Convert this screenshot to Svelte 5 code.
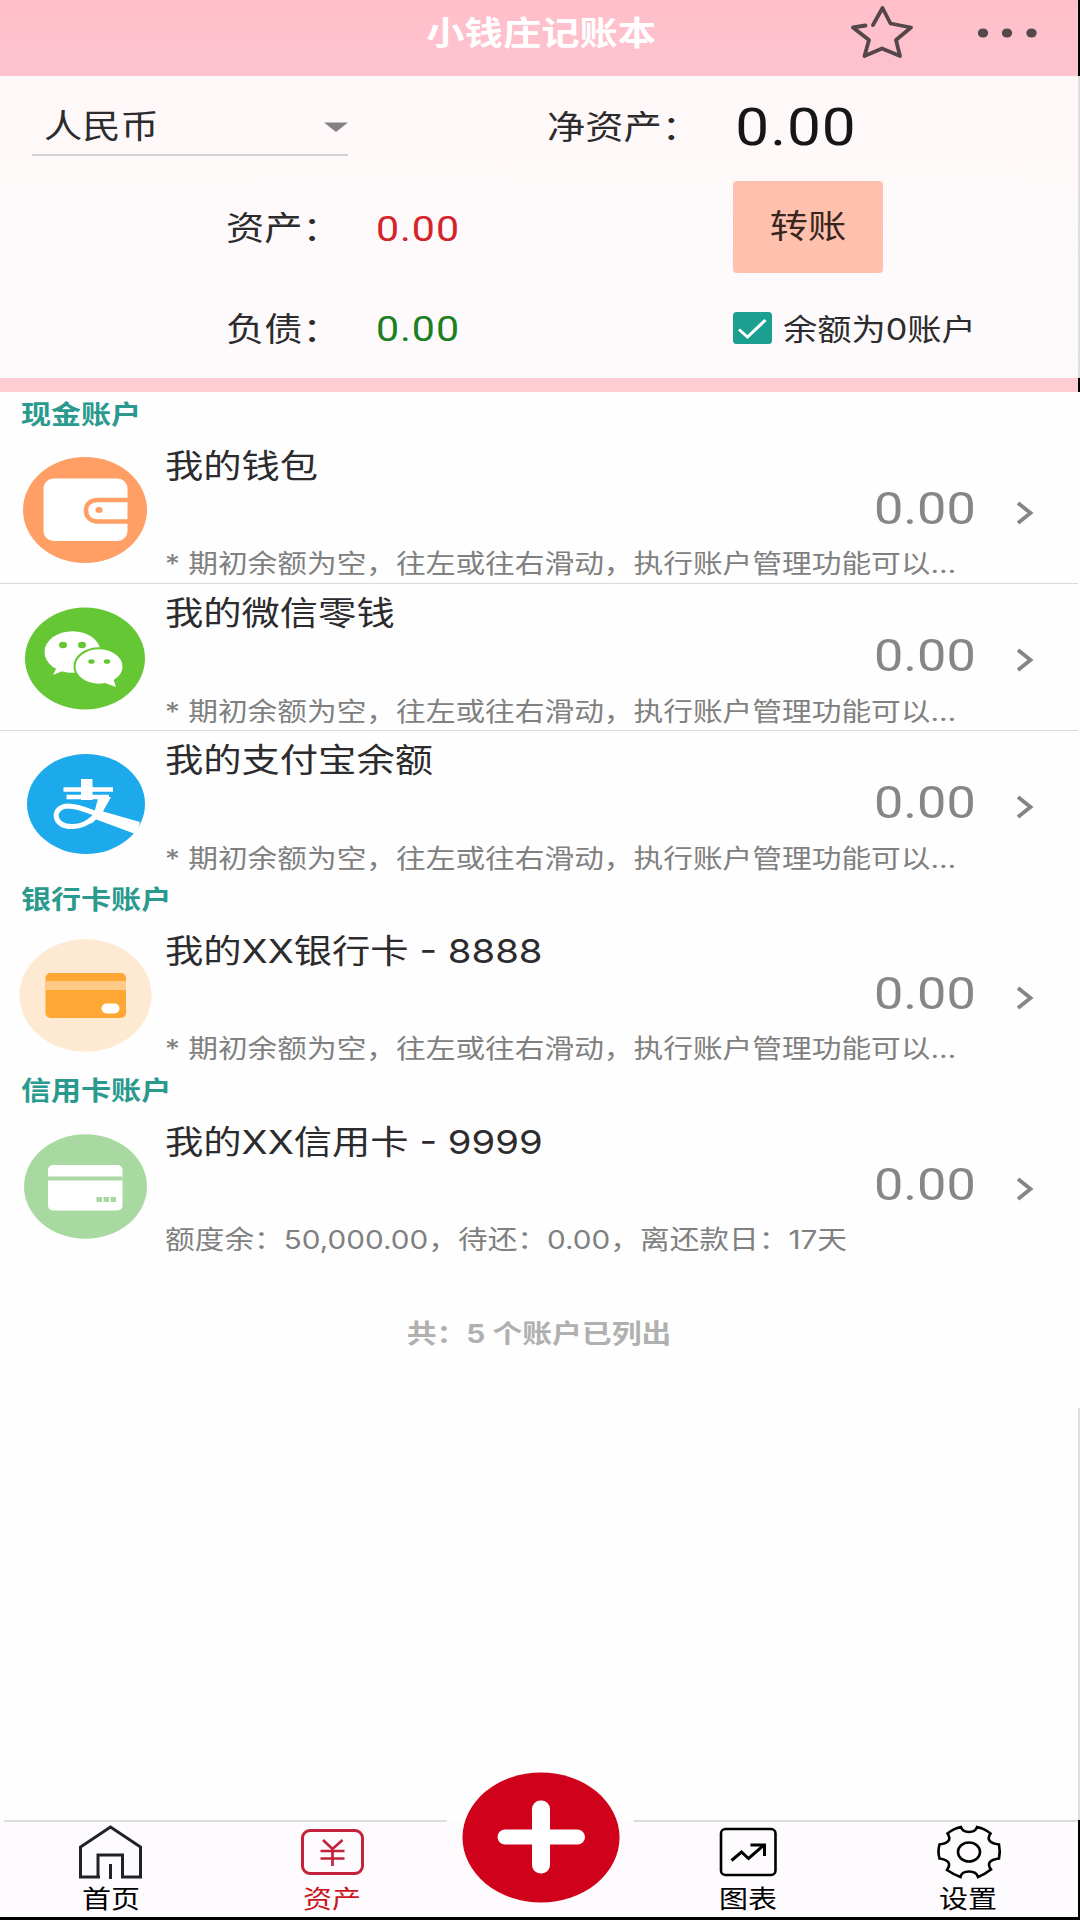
<script lang="ts">
	type Icono = 'wallet' | 'wechat' | 'alipay' | 'bank' | 'credit';

	type Account = {
		name: string;
		icon: Icono;
		balance: string;
		note: string;
	};

	type Group = {
		title: string;
		accounts: Account[];
	};

	const hint = '* 期初余额为空，往左或往右滑动，执行账户管理功能可以…';

	const groups: Group[] = [
		{
			title: '现金账户',
			accounts: [
				{ name: '我的钱包', icon: 'wallet', balance: '0.00', note: hint },
				{ name: '我的微信零钱', icon: 'wechat', balance: '0.00', note: hint },
				{ name: '我的支付宝余额', icon: 'alipay', balance: '0.00', note: hint }
			]
		},
		{
			title: '银行卡账户',
			accounts: [{ name: '我的XX银行卡 - 8888', icon: 'bank', balance: '0.00', note: hint }]
		},
		{
			title: '信用卡账户',
			accounts: [
				{
					name: '我的XX信用卡 - 9999',
					icon: 'credit',
					balance: '0.00',
					note: '额度余：50,000.00，待还：0.00，离还款日：17天'
				}
			]
		}
	];

	let total = $derived(groups.reduce((n, g) => n + g.accounts.length, 0));
	let showZero = $state(true);
</script>

<div class="page">
	<header class="topbar">
		<h1 class="wide center">小钱庄记账本</h1>
		<svg class="star" width="64" height="56" viewBox="0 0 64 56">
			<path
				d="M23 23 L32.5 6 L40.5 21.5 L61 25.5 L46 38 L50 54 L32 46.5 L14.5 54 L19 38 L3 25.5 L15.5 23.5"
				fill="none"
				stroke="#54474b"
				stroke-width="3.8"
				stroke-linecap="round"
				stroke-linejoin="round"
			/>
		</svg>
		<svg class="dots" width="60" height="12" viewBox="0 0 60 12" fill="#54474b">
			<ellipse cx="6" cy="6" rx="5.2" ry="4.6" />
			<ellipse cx="30" cy="6" rx="5.2" ry="4.6" />
			<ellipse cx="54.5" cy="6" rx="5.2" ry="4.6" />
		</svg>
	</header>

	<section class="summary">
		<div class="select">
			<span class="wide">人民币</span>
			<svg width="24" height="10" viewBox="0 0 24 10"><path d="M0 0.5H24L12 10Z" fill="#858183" /></svg>
		</div>
		<span class="label wide net">净资产：</span>
		<span class="net-value wide">0.00</span>

		<span class="label wide assets">资产：</span>
		<span class="amount wide red">0.00</span>
		<button class="transfer"><span class="wide center">转账</span></button>

		<span class="label wide debts">负债：</span>
		<span class="amount wide green">0.00</span>
		<button class="check" onclick={() => (showZero = !showZero)}>
			<svg width="39" height="32" viewBox="0 0 39 32">
				<rect width="39" height="32" rx="3.5" fill="#1c9f90" />
				{#if showZero}
					<path d="M6 17.5 L14.5 25 L32.5 8" fill="none" stroke="#fff" stroke-width="3" />
				{/if}
			</svg>
			<span class="wide">余额为0账户</span>
		</button>
	</section>

	<main>
		{#each groups as group (group.title)}
			<h2><span class="wide">{group.title}</span></h2>
			{#each group.accounts as account (account.name)}
				<div class="row">
					<svg class="icon" width="165" height="146" viewBox="0 0 165 146">
						{#if account.icon === 'wallet'}
							<ellipse cx="85" cy="74" rx="62" ry="53" fill="#ff9f65" />
							<rect x="43.5" y="42.5" width="84" height="62.5" rx="10" fill="#fff" />
							<path
								d="M128 64H98C90 64 86 68.5 86 74.5S90 85.5 98 85.5H128"
								fill="none"
								stroke="#ff9f65"
								stroke-width="4.5"
							/>
							<ellipse cx="99" cy="74" rx="3.6" ry="3" fill="#ff9f65" />
						{:else if account.icon === 'wechat'}
							<ellipse cx="85" cy="74.5" rx="60" ry="51" fill="#65c734" />
							<ellipse cx="72.5" cy="68" rx="28" ry="20.8" fill="#fff" />
							<path d="M58 81L53 91L65 86Z" fill="#fff" />
							<ellipse cx="99" cy="82.500" rx="24.5" ry="18.2" fill="#fff" stroke="#65c734" stroke-width="2" />
							<path d="M105 99L116 103L113 94Z" fill="#fff" />
							<g fill="#65c734">
								<ellipse cx="63" cy="61" rx="4" ry="3.2" />
								<ellipse cx="82" cy="61" rx="4" ry="3.2" />
								<ellipse cx="91.5" cy="77.5" rx="3.2" ry="2.3" />
								<ellipse cx="107" cy="77.5" rx="3.2" ry="2.3" />
							</g>
						{:else if account.icon === 'alipay'}
							<ellipse cx="86" cy="73" rx="59" ry="50" fill="#1caaec" />
							<path d="M81 48H92.5V69H81Z" fill="#fff" />
							<path d="M63.5 58.5H113M66.5 66H109" stroke="#fff" stroke-width="4.6" />
							<path
								d="M105 66C101 81 90 95 73 95.500C52 96.500 51 75.500 68 75C80 75 90 81 102 85"
								fill="none"
								stroke="#fff"
								stroke-width="5"
							/>
							<path d="M98.5 66H111L101 84L91 93Z" fill="#fff" />
							<path d="M98 79L140 91L138 98L134 102.500L95 88Z" fill="#fff" />
						{:else if account.icon === 'bank'}
							<ellipse cx="85.5" cy="74.5" rx="66" ry="56.200" fill="#feead2" />
							<rect x="45.5" y="52" width="80.5" height="45" rx="5" fill="#ffa734" />
							<path d="M45.5 60H126V69H45.5Z" fill="#ffca85" />
							<rect x="101.5" y="82.5" width="18" height="10" rx="5" fill="#fff" />
						{:else}
							<ellipse cx="85.5" cy="74.5" rx="61.500" ry="52.300" fill="#a8d9a1" />
							<rect x="48" y="53" width="74.5" height="45.500" rx="5" fill="#fff" />
							<path d="M48 66.5H122.5" stroke="#a8d9a1" stroke-width="4" />
							<path d="M96.5 87.5H116" stroke="#a8d9a1" stroke-width="5" stroke-dasharray="5.5 1.5" />
						{/if}
					</svg>
					<div class="info">
						<div class="name wide">{account.name}</div>
						<div class="balance"><span class="wide right">{account.balance}</span></div>
						<div class="note wide">{account.note}</div>
					</div>
					<svg class="chevron" width="18" height="24" viewBox="0 0 18 24">
						<path d="M2 2L14.5 12L2 22" fill="none" stroke="#858585" stroke-width="3.8" />
					</svg>
				</div>
			{/each}
		{/each}
		<p class="total"><span class="wide center">共：{total} 个账户已列出</span></p>
	</main>

	<nav>
		<div class="tab">
			<svg width="66" height="54" viewBox="0 0 66 54" fill="none" stroke="#222226" stroke-width="3">
				<path d="M22 52H2.5V22L32.5 2L62.5 22V52H44.5V30H20V52" />
				<path d="M32.5 39V54" />
			</svg>
			<span class="wide center">首页</span>
		</div>
		<div class="tab active">
			<svg width="66" height="54" viewBox="0 0 66 54" fill="none" stroke="#c4213a" stroke-width="3">
				<rect x="2.5" y="5.5" width="60" height="43" rx="7.5" />
				<path d="M23 15L32.5 24L42.5 15M32.500 24V41M20.5 26H44.5M20.5 33.5H44.5" stroke-width="2.7" />
			</svg>
			<span class="wide center">资产</span>
		</div>
		<div class="tab">
			<svg class="fab" width="158" height="131" viewBox="0 0 158 131">
				<ellipse cx="79" cy="65.5" rx="78.5" ry="65" fill="#d0021b" />
				<rect x="70" y="28.5" width="18" height="73" rx="8.5" fill="#fff" />
				<rect x="35.5" y="57.5" width="87.5" height="15" rx="7.5" fill="#fff" />
			</svg>
		</div>
		<div class="tab">
			<svg width="66" height="54" viewBox="0 0 66 54" fill="none" stroke="#000" stroke-width="2.6">
				<rect x="5" y="4" width="54.5" height="46" rx="4.5" />
				<path d="M15.5 35.5L25.5 27L32.500 33.5L47.5 20.5" stroke-width="3" />
				<path d="M34.5 20H48.5V31" stroke-width="3" />
			</svg>
			<span class="wide center">图表</span>
		</div>
		<div class="tab">
			<svg width="66" height="54" viewBox="0 0 66 54" fill="none" stroke="#000" stroke-width="2.6">
				<path
					d="M25 2Q17.5 3.5 11.5 8.5Q17.5 17.5 3.5 19.5Q1.5 26.5 3.5 33.5Q17.5 35.5 11 45Q17.500 49.500 24.5 52Q25.5 46.5 33 46.5T42 52Q48.500 49.5 55 44.5Q48.5 35.5 63 33.500Q64.500 26.500 63 19.5Q48.5 17.5 54.5 8.5Q48.5 3.5 41 2Q39.500 7 33 7T25 2Z"
				/>
				<ellipse cx="33" cy="27" rx="11" ry="9.5" />
			</svg>
			<span class="wide center">设置</span>
		</div>
	</nav>
</div>

<style>
	:global(body) {
		background: #fff;
	}

	.page {
		display: flex;
		flex-direction: column;
		width: 1080px;
		height: 1920px;
		padding: 0 2px 3px 0;
		box-sizing: border-box;
		overflow: hidden;
		font-family: Roboto, 'Noto Sans CJK SC', sans-serif;
		color: #2c2b2d;
		background: linear-gradient(
			#000 76px,
			#dedede 76px 378px,
			#000 378px 392px,
			#fefefe 392px 1408px,
			#dedede 1408px 1820px,
			#000 1820px
		);
	}

	/* glyphs are drawn a little wider than they are tall */
	.wide {
		display: inline-block;
		white-space: nowrap;
		transform: scaleX(1.16);
		transform-origin: left center;
	}

	.wide.center {
		transform-origin: center;
	}

	.wide.right {
		transform-origin: right center;
	}

	.topbar {
		display: grid;
		grid-template-columns: 850px 127px 1fr;
		height: 76px;
		background: linear-gradient(#ffbfca, #fdc3cf);
	}

	h1 {
		grid-column: 1;
		justify-self: end;
		width: 196px;
		margin: 0 212px 0 0;
		font-size: 33px;
		line-height: 68px;
		color: #fff;
	}

	.star {
		margin-top: 2px;
	}

	.dots {
		margin-top: 27px;
	}

	.summary {
		display: grid;
		grid-template-columns: 226px 150px 171px 186px 1fr;
		grid-template-rows: 101px 101px 100px;
		align-items: center;
		height: 302px;
		border-bottom: 14px solid #ffccd4;
		background: linear-gradient(#fff8f8, #fdfafc);
		font-size: 33px;
	}

	.label {
		padding-bottom: 3px;
	}

	.select {
		grid-column: 1 / 3;
		display: flex;
		align-items: center;
		justify-content: space-between;
		width: 304px;
		height: 56px;
		margin-left: 32px;
		padding-left: 12px;
		border-bottom: 2px solid #d6d1d2;
	}

	.select .wide {
		padding-bottom: 3px;
	}

	.select svg {
		margin-top: 3px;
	}

	.net {
		grid-column: 4;
	}

	.net-value {
		grid-column: 5;
		padding: 2px 0 0 2px;
		font-size: 52px;
		letter-spacing: 0.8px;
		color: #161616;
	}

	.assets,
	.debts {
		grid-column: 2;
	}

	.amount {
		padding-top: 2px;
		font-size: 35.5px;
		letter-spacing: 0.8px;
	}

	.red {
		color: #d3242a;
	}

	.green {
		color: #1c7f24;
	}

	button {
		padding: 0;
		border: none;
		font: inherit;
		color: inherit;
		background: none;
		cursor: pointer;
	}

	.transfer {
		grid-column: 5;
		width: 150px;
		height: 92px;
		margin-bottom: 1px;
		padding-bottom: 6px;
		border-radius: 4px;
		background: #ffc1ae;
		color: #38261f;
	}

	.check {
		grid-column: 5;
		display: flex;
		align-items: center;
		gap: 11px;
		font-family: Inter, 'Noto Sans CJK SC', sans-serif;
		font-size: 29.5px;
	}

	.check .wide {
		padding-bottom: 3px;
	}

	main {
		flex: 1;
		background: #fefefe;
	}

	h2 {
		height: 44px;
		margin: 0;
		padding-left: 21px;
		font-size: 25.9px;
		line-height: 46px;
		color: #2a9a8e;
	}

	.row {
		display: flex;
		height: 147px;
		box-sizing: border-box;
	}

	.row + .row {
		border-top: 1px solid #dadada;
	}

	.info {
		display: flex;
		flex-direction: column;
		align-items: flex-start;
		width: 811px;
		font-family: Inter, 'Noto Sans CJK SC', sans-serif;
	}

	.name {
		height: 54px;
		font-size: 33px;
		line-height: 61px;
	}

	.balance {
		align-self: flex-end;
		height: 56px;
		font-family: Roboto, sans-serif;
		font-size: 45px;
		line-height: 38px;
		color: #868686;
	}

	.row + .row .name {
		line-height: 59px;
	}

	.row + .row .balance {
		line-height: 36px;
	}

	.note {
		height: 34px;
		font-size: 25.6px;
		line-height: 35px;
		color: #808080;
	}

	.chevron {
		margin: 65px 0 0 40px;
	}

	.row + .row .chevron {
		margin-top: 64px;
	}

	.total {
		margin: 55px 0 0;
		text-align: center;
		font-family: Inter, 'Noto Sans CJK SC', sans-serif;
		font-size: 25.7px;
		font-weight: 700;
		line-height: 40px;
		color: #b0b0b0;
	}

	nav {
		display: grid;
		grid-template-columns: 222px 221px 195px 221px 219px;
		height: 97px;
		background:
			linear-gradient(
					to right,
					transparent 4px,
					#dcdcdd 4px 447px,
					transparent 447px 634px,
					#dcdcdd 634px
				)
				0 0 / 100% 2px no-repeat,
			#fdfbfd;
		font-size: 25px;
		color: #000;
	}

	.tab {
		display: flex;
		flex-direction: column;
		align-items: center;
		padding-top: 5px;
		line-height: 42px;
	}

	.active {
		color: #c8161d;
	}

	.fab {
		flex: none;
		margin-top: -53px;
	}
</style>
